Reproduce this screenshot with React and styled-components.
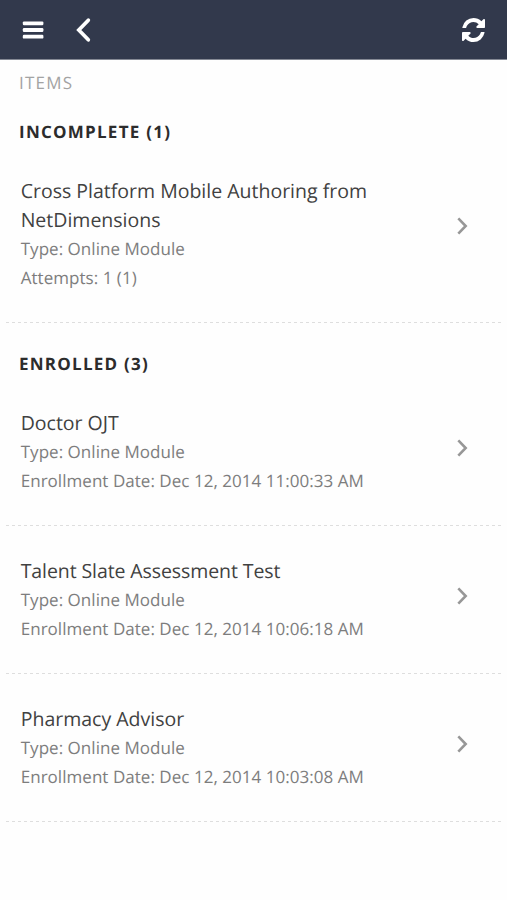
import styled, { createGlobalStyle } from "styled-components";

const GlobalStyle = createGlobalStyle`
  body {
    margin: 0;
    background-color: #fefefe;
    font-family: "Open Sans", "Noto Sans", sans-serif;
    text-rendering: geometricPrecision;
  }
`;
const Page = styled.div`
  min-height: 900px;
`;
const Toolbar = styled.header`
  display: flex;
  align-items: center;
  box-sizing: border-box;
  height: 60px;
  padding: 1px 22px 0 22px;
  background-color: #32394c;
  background-clip: padding-box;
  border-bottom: 1px solid #858994;
`;
const IconButton = styled.button`
  display: flex;
  padding: 0;
  border: none;
  background-color: transparent;
  color: #fff;
  cursor: pointer;
  margin-left: ${({ $gap }) => $gap || "0"};
`;
const PageTitle = styled.h1`
  margin: 0;
  padding: 11px 19px 0;
  font-size: 17px;
  font-weight: 400;
  line-height: 24px;
  letter-spacing: 1.2px;
  color: #a3a3a3;
`;
const SectionTitle = styled.h2`
  box-sizing: border-box;
  height: 55px;
  margin: 0;
  padding: 29px 19px 0;
  font-size: 17px;
  font-weight: 700;
  line-height: 24px;
  letter-spacing: 1.25px;
  color: #2c2c2c;
`;
const FirstSection = styled.div`
  margin-top: -4px;
`;
const Item = styled.div`
  display: flex;
  justify-content: space-between;
  box-sizing: border-box;
  height: ${({ $tall }) => ($tall ? "177px" : "148px")};
  margin: 0 5px 0 6px;
  padding: 29.6px 33.8px 0 14.7px;
  background: repeating-linear-gradient(90deg, #dedede 0 3px, transparent 3px 6px)
    left bottom / 100% 1px no-repeat;
`;
const Info = styled.div`
  width: 370px;
  line-height: 29.3px;
`;
const Name = styled.div`
  font-size: 19.5px;
  letter-spacing: ${({ $tracking }) => $tracking || "normal"};
  color: #414141;
`;
const Meta = styled.div`
  font-size: 17px;
  letter-spacing: 0.035px;
  color: #7d7d7d;
`;
const Arrow = styled.svg`
  display: block;
  flex: none;
  margin-top: ${({ $tall }) => ($tall ? "40.7px" : "30.7px")};
`;

const sections = [
  {
    title: "INCOMPLETE (1)",
    items: [
      {
        name: "Cross Platform Mobile Authoring from NetDimensions",
        detail: "Attempts: 1 (1)",
        tall: true,
      },
    ],
  },
  {
    title: "ENROLLED (3)",
    items: [
      { name: "Doctor OJT", detail: "Enrollment Date: Dec 12, 2014 11:00:33 AM" },
      {
        name: "Talent Slate Assessment Test",
        detail: "Enrollment Date: Dec 12, 2014 10:06:18 AM",
        tracking: "-0.09px",
      },
      {
        name: "Pharmacy Advisor",
        detail: "Enrollment Date: Dec 12, 2014 10:03:08 AM",
      },
    ],
  },
];

const MenuIcon = () => (
  <svg width="22" height="20" viewBox="0 0 22 20" fill="currentColor">
    <rect x="0.8" y="1.4" width="20.6" height="3.8" rx="1.2" />
    <rect x="0.8" y="8.1" width="20.6" height="3.8" rx="1.2" />
    <rect x="0.8" y="14.8" width="20.6" height="3.8" rx="1.2" />
  </svg>
);
const BackIcon = () => (
  <svg width="16" height="26" viewBox="0 0 16 26" fill="none" stroke="currentColor">
    <path d="M13.3 3.2 L3.8 13 L13.3 22.8" strokeWidth="3.7" strokeLinecap="round" />
  </svg>
);
const RefreshIcon = () => (
  <svg width="23" height="24" viewBox="0 0 1536 1536" fill="currentColor" preserveAspectRatio="none">
    <path d="M1511 928q0 5-1 7-64 268-268 434.500T764 1536q-146 0-282.500-55T238 1324l-129 129q-19 19-45 19t-45-19-19-45V960q0-26 19-45t45-19h448q26 0 45 19t19 45-19 45l-137 137q71 66 161 102t187 36q134 0 250-65t186-179q11-17 53-117 8-23 30-23h192q13 0 22.500 9.500t9.500 22.500zm25-800v448q0 26-19 45t-45 19h-448q-26 0-45-19t-19-45 19-45l138-138Q969 256 768 256q-134 0-250 65T332 500q-11 17-53 117-8 23-30 23H50q-13 0-22.500-9.500T18 608v-7q65-268 270-434.500T768 0q146 0 284 55.500T1297 212l130-129q19-19 45-19t45 19 19 45z" />
  </svg>
);

const App = () => {
  const renderSection = ({ title, items }) => (
    <section key={title}>
      <SectionTitle>{title}</SectionTitle>
      {items.map(({ name, detail, tall, tracking }) => (
        <Item key={name} $tall={tall}>
          <Info>
            <Name $tracking={tracking}>{name}</Name>
            <Meta>Type: Online Module</Meta>
            <Meta>{detail}</Meta>
          </Info>
          <Arrow $tall={tall} width="12" height="20" viewBox="0 0 12 20">
            <path d="M2.3 2.3 L9.7 10 L2.3 17.7" fill="none" stroke="#979797" strokeWidth="2.6" />
          </Arrow>
        </Item>
      ))}
    </section>
  );

  return (
    <>
      <GlobalStyle />
      <Page>
        <Toolbar>
          <IconButton aria-label="Menu">
            <MenuIcon />
          </IconButton>
          <IconButton $gap="31px" aria-label="Back">
            <BackIcon />
          </IconButton>
          <IconButton $gap="auto" aria-label="Refresh">
            <RefreshIcon />
          </IconButton>
        </Toolbar>
        <PageTitle>ITEMS</PageTitle>
        <FirstSection>{renderSection(sections[0])}</FirstSection>
        {renderSection(sections[1])}
      </Page>
    </>
  );
};
export default App;
